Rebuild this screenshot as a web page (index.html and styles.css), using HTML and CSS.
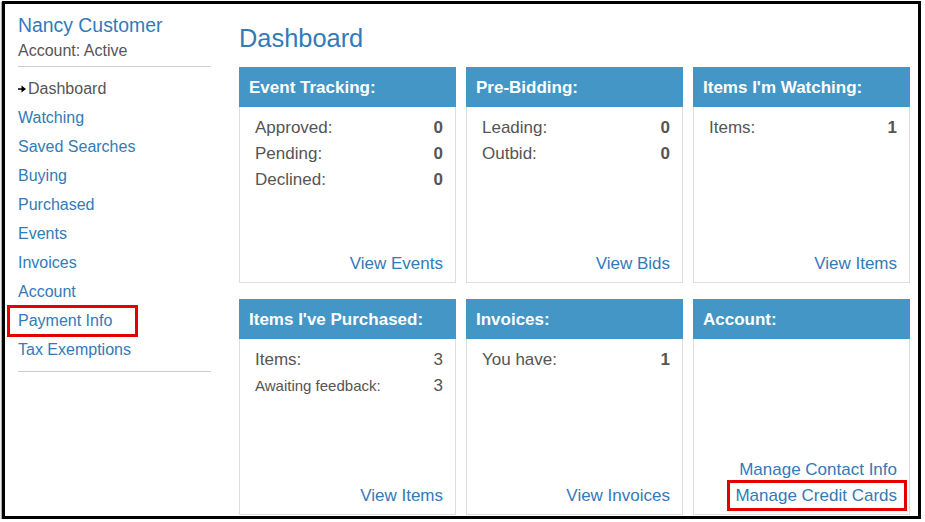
FILE: index.html
```html
<!DOCTYPE html>
<html>

<head>
	<meta charset="UTF-8">
	<title>Dashboard</title>
	<link rel="stylesheet" href="styles.css">
</head>

<body>
	<div class="frame">
		<div class="sidebar">
			<div class="userName">Nancy Customer</div>
			<div class="userStatus">Account: Active</div>
			<ul class="nav">
				<li class="current"><svg class="arrow" width="8" height="8" viewBox="0 0 8 8"><path d="M0 3.2h4v1.6H0z M3.5 0.5L8 4 3.5 7.5z" fill="#000"/></svg>Dashboard</li>
				<li><a href="#">Watching</a></li>
				<li><a href="#">Saved Searches</a></li>
				<li><a href="#">Buying</a></li>
				<li><a href="#">Purchased</a></li>
				<li><a href="#">Events</a></li>
				<li><a href="#">Invoices</a></li>
				<li><a href="#">Account</a></li>
				<li><a href="#" class="marked markPayment">Payment Info</a></li>
				<li><a href="#">Tax Exemptions</a></li>
			</ul>
		</div>
		<div class="main">
			<h1>Dashboard</h1>
			<div class="panels">
				<div class="panel">
					<div class="panelHead">Event Tracking:</div>
					<div class="panelBody">
						<div class="stat"><span>Approved:</span><b>0</b></div>
						<div class="stat"><span>Pending:</span><b>0</b></div>
						<div class="stat"><span>Declined:</span><b>0</b></div>
					</div>
					<div class="panelLinks"><a href="#">View Events</a></div>
				</div>
				<div class="panel">
					<div class="panelHead">Pre-Bidding:</div>
					<div class="panelBody">
						<div class="stat"><span>Leading:</span><b>0</b></div>
						<div class="stat"><span>Outbid:</span><b>0</b></div>
					</div>
					<div class="panelLinks"><a href="#">View Bids</a></div>
				</div>
				<div class="panel">
					<div class="panelHead">Items I'm Watching:</div>
					<div class="panelBody">
						<div class="stat"><span>Items:</span><b>1</b></div>
					</div>
					<div class="panelLinks"><a href="#">View Items</a></div>
				</div>
				<div class="panel">
					<div class="panelHead">Items I've Purchased:</div>
					<div class="panelBody">
						<div class="stat"><span>Items:</span><span>3</span></div>
						<div class="stat small"><span>Awaiting feedback:</span><span class="num">3</span></div>
					</div>
					<div class="panelLinks"><a href="#">View Items</a></div>
				</div>
				<div class="panel">
					<div class="panelHead">Invoices:</div>
					<div class="panelBody">
						<div class="stat"><span>You have:</span><b>1</b></div>
					</div>
					<div class="panelLinks"><a href="#">View Invoices</a></div>
				</div>
				<div class="panel">
					<div class="panelHead">Account:</div>
					<div class="panelBody"></div>
					<div class="panelLinks">
						<a href="#">Manage Contact Info</a>
						<a href="#" class="marked markCards">Manage Credit Cards</a>
					</div>
				</div>
			</div>
		</div>
	</div>
</body>

</html>
```

FILE: styles.css
```css
body {
	font-family: "Liberation Sans", Arial, Helvetica, sans-serif;
	margin: 0;
	background: #fff;
}

a {
	color: #337ab7;
	text-decoration: none;
}

.frame {
	box-sizing: border-box;
	width: 919px;
	height: 518px;
	margin: 1px 0 0 2px;
	border: 3px solid #000;
	box-shadow: -1px 1px 1px #aaa;
	display: flex;
	padding: 0 8px 0 13px;
	overflow: hidden;
}

.sidebar {
	width: 193px;
	flex: none;
	margin-right: 28px;
}

.userName {
	color: #337ab7;
	font-size: 19.4px;
	line-height: 24px;
	margin-top: 9px;
}

.userStatus {
	color: #555;
	font-size: 16px;
	line-height: 20px;
	margin-top: 4px;
	padding-bottom: 5px;
	border-bottom: 1px solid #ccc;
}

.nav {
	list-style: none;
	margin: 0;
	padding: 7px 0 7px;
	border-bottom: 1px solid #ccc;
}

.nav li {
	font-size: 16px;
	line-height: 29px;
}

.nav li.current {
	color: #555;
}

.arrow {
	margin: 0 2px 1px 0;
}

.marked {
	position: relative;
	display: inline-block;
}

.marked::after {
	content: "";
	position: absolute;
	border: 3px solid #e50000;
}

.markPayment::after {
	left: -11px;
	right: -26px;
	top: -1px;
	bottom: -2px;
}

.markCards::after {
	left: -8px;
	right: -10px;
	top: -3px;
	bottom: -2px;
}

.main {
	flex: 1;
}

h1 {
	font-weight: normal;
	color: #337ab7;
	font-size: 25.4px;
	line-height: 30px;
	margin: 19px 0 14px;
}

.panels {
	display: grid;
	grid-template-columns: 1fr 1fr 1fr;
	grid-auto-rows: 216px;
	column-gap: 10px;
	row-gap: 16px;
}

.panel {
	border: 1px solid #ddd;
	display: flex;
	flex-direction: column;
}

.panelHead {
	background: #4396c5;
	color: #fff;
	font-weight: bold;
	font-size: 17px;
	line-height: 39px;
	padding: 1px 10px 0;
	margin: -1px -1px 0;
}

.panelBody {
	flex: 1;
	padding: 8px 12px 0 15px;
}

.stat {
	display: flex;
	justify-content: space-between;
	font-size: 17px;
	line-height: 26px;
	color: #555;
}

.stat b {
	color: #555;
}

.stat.small span:first-child {
	font-size: 15px;
}

.stat.small .num {
	font-size: 17px;
}

.panelLinks {
	display: flex;
	flex-direction: column;
	align-items: flex-end;
	padding: 0 12px 5px;
	font-size: 17px;
	line-height: 26px;
}
```
